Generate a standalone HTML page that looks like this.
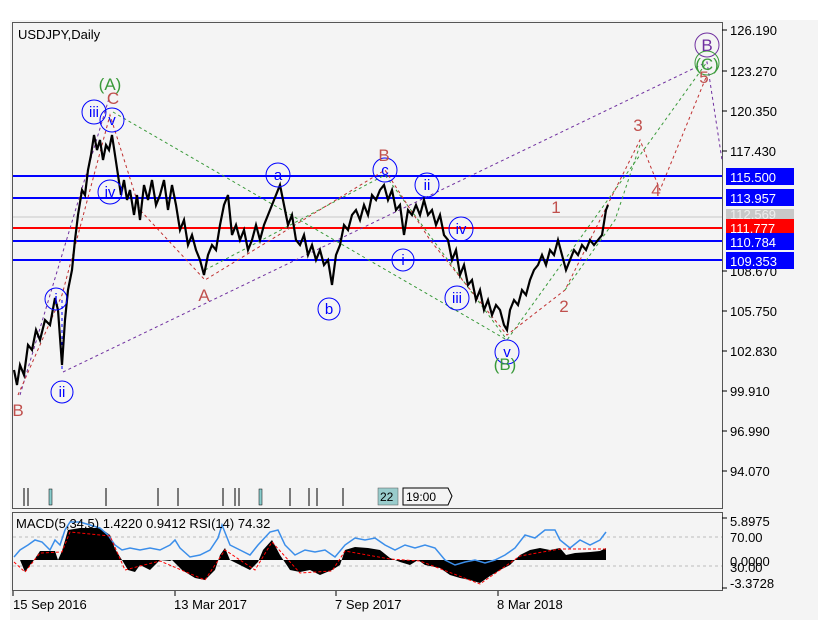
<!DOCTYPE html>
<html><head><meta charset="utf-8"><style>
body{margin:0;background:#fff;width:827px;height:631px;overflow:hidden;font-family:"Liberation Sans",sans-serif}
svg{position:absolute;left:0;top:0}
text{font-family:"Liberation Sans",sans-serif}
</style></head><body>
<svg width="827" height="631" viewBox="0 0 827 631">
<rect x="10" y="20" width="808" height="600" fill="#f4f4f4"/>
<rect x="12.5" y="22.5" width="710" height="486" fill="#f4f4f4" stroke="#555" stroke-width="1"/>
<rect x="12.5" y="512.5" width="710" height="78" fill="#f4f4f4" stroke="#555" stroke-width="1"/>
<text x="18" y="39" font-size="13" fill="#000">USDJPY,Daily</text>
<line x1="13" y1="217" x2="722" y2="217" stroke="#c8c8c8" stroke-width="1"/>
<g stroke-width="2">
<line x1="13" y1="176" x2="722" y2="176" stroke="#0000ff"/>
<line x1="13" y1="198" x2="722" y2="198" stroke="#0000ff"/>
<line x1="13" y1="228" x2="722" y2="228" stroke="#ff0000"/>
<line x1="13" y1="241" x2="722" y2="241" stroke="#0000ff"/>
<line x1="13" y1="260" x2="722" y2="260" stroke="#0000ff"/>
</g>
<g fill="none" stroke-width="1" stroke-dasharray="3,3">
<polyline points="63,372 707,62 722,160" stroke="#7030a0"/>
<polyline points="20,395 110,95" stroke="#7030a0"/>
<polyline points="113,112 507,340 707,62" stroke="#3a9a3a"/>
<polyline points="205,270 385,175 507,340" stroke="#3a9a3a"/>
<polyline points="18,395 62,295 110,115 140,210 205,280 385,170 430,240 507,335 565,290 640,140 660,190 707,75" stroke="#c03030"/>
<polyline points="565,290 615,220 640,145" stroke="#3a9a3a"/>
<polyline points="62,300 62,370" stroke="#0000ff"/>
</g>
<polyline fill="none" stroke="#000" stroke-width="2.2" points="14,370 17,385 20,365 24,375 28,345 32,350 36,330 40,340 45,320 50,325 55,298 58,310 62,365 65,320 68,290 72,270 75,240 78,215 82,190 85,195 88,170 91,155 94,135 97,150 100,140 103,160 106,145 109,150 112,135 115,155 118,175 121,195 124,180 127,200 130,190 134,215 137,195 140,220 144,185 148,200 152,180 156,205 160,195 164,180 168,210 172,185 176,205 180,230 184,220 188,245 192,235 196,250 200,260 204,275 208,255 212,245 216,250 220,225 224,205 228,195 232,235 236,225 240,240 244,230 248,250 252,240 256,225 260,240 264,225 268,215 272,205 276,195 280,185 284,205 288,225 292,215 296,240 300,245 304,235 308,255 312,245 316,260 320,250 324,265 328,260 332,285 336,255 340,245 344,225 348,230 352,215 356,210 360,220 364,205 368,215 372,195 376,200 380,190 384,185 388,200 392,190 396,210 400,205 404,235 408,210 412,215 416,205 420,215 424,200 428,215 432,210 436,225 440,215 444,235 448,240 452,260 456,250 460,275 464,265 468,285 472,280 476,300 480,290 484,310 488,300 492,315 496,305 500,310 504,325 507,330 510,310 514,300 518,305 522,290 526,295 530,280 534,270 538,265 542,255 546,265 550,250 554,255 558,240 562,255 566,270 570,260 574,250 578,255 582,245 586,250 590,240 594,245 598,240 602,235 606,210 608,205"/>
<g font-size="15" text-anchor="middle" fill="#0000ff">
<g fill="none" stroke="#0000ff" stroke-width="1">
<circle cx="94" cy="112" r="12"/><circle cx="112" cy="120" r="12"/><circle cx="110" cy="192" r="12"/>
<circle cx="56" cy="299" r="11"/><circle cx="62" cy="392" r="11"/><circle cx="278" cy="175" r="12"/>
<circle cx="329" cy="309" r="11"/><circle cx="385" cy="170" r="12"/><circle cx="427" cy="185" r="12"/>
<circle cx="403" cy="260" r="11"/><circle cx="461" cy="229" r="12"/><circle cx="457" cy="298" r="12"/>
<circle cx="507" cy="352" r="12"/><circle cx="707" cy="45" r="12" stroke="#7030a0"/><circle cx="707" cy="63" r="12" stroke="#3a9a3a"/>
</g>
<text x="94" y="117">iii</text><text x="112" y="125">v</text><text x="110" y="197">iv</text>
<text x="56" y="304">i</text><text x="62" y="397">ii</text><text x="278" y="180">a</text>
<text x="329" y="314">b</text><text x="385" y="175">c</text><text x="427" y="190">ii</text>
<text x="403" y="265">i</text><text x="461" y="234">iv</text><text x="457" y="303">iii</text>
<text x="507" y="357">v</text>
</g>
<g font-size="17" text-anchor="middle">
<text x="110" y="90" fill="#3a9a3a">(A)</text>
<text x="505" y="370" fill="#3a9a3a">(B)</text>
<text x="707" y="70" fill="#3a9a3a">(C)</text>
<text x="707" y="51" fill="#7030a0">B</text>
<text x="113" y="104" fill="#c0504d">C</text>
<text x="384" y="161" fill="#c0504d">B</text>
<text x="204" y="301" fill="#c0504d">A</text>
<text x="18" y="416" fill="#c0504d">B</text>
<text x="556" y="213" fill="#c0504d">1</text>
<text x="564" y="312" fill="#c0504d">2</text>
<text x="638" y="131" fill="#c0504d">3</text>
<text x="656" y="196" fill="#c0504d">4</text>
<text x="704" y="83" fill="#c0504d">5</text>
</g>
<g stroke="#000" stroke-width="1">
<line x1="722" y1="30" x2="727" y2="30"/><line x1="722" y1="71" x2="727" y2="71"/><line x1="722" y1="111" x2="727" y2="111"/>
<line x1="722" y1="151" x2="727" y2="151"/><line x1="722" y1="271" x2="727" y2="271"/><line x1="722" y1="311" x2="727" y2="311"/>
<line x1="722" y1="351" x2="727" y2="351"/><line x1="722" y1="391" x2="727" y2="391"/><line x1="722" y1="431" x2="727" y2="431"/><line x1="722" y1="471" x2="727" y2="471"/>
</g>
<g font-size="13" fill="#000">
<text x="730" y="35">126.190</text><text x="730" y="76">123.270</text><text x="730" y="116">120.350</text>
<text x="730" y="156">117.430</text><text x="730" y="276">108.670</text><text x="730" y="316">105.750</text>
<text x="730" y="356">102.830</text><text x="730" y="396">99.910</text><text x="730" y="436">96.990</text><text x="730" y="476">94.070</text>
</g>
<rect x="726" y="168" width="68" height="17" fill="#0000ff"/><text x="730" y="182" font-size="13" fill="#fff">115.500</text>
<rect x="726" y="189" width="68" height="17" fill="#0000ff"/><text x="730" y="203" font-size="13" fill="#fff">113.957</text>
<rect x="726" y="209" width="68" height="10" fill="#c8c8c8"/><text x="730" y="219" font-size="13" fill="#eee">112.569</text>
<rect x="726" y="219" width="68" height="17" fill="#ff0000"/><text x="730" y="233" font-size="13" fill="#fff">111.777</text>
<rect x="726" y="233" width="68" height="17" fill="#0000ff"/><text x="730" y="247" font-size="13" fill="#fff">110.784</text>
<rect x="726" y="252" width="68" height="17" fill="#0000ff"/><text x="730" y="266" font-size="13" fill="#fff">109.353</text>
<g stroke="#000" stroke-width="1">
<line x1="24" y1="488" x2="24" y2="506"/><line x1="28" y1="488" x2="28" y2="506"/><line x1="106" y1="488" x2="106" y2="506"/>
<line x1="158" y1="488" x2="158" y2="506"/><line x1="178" y1="488" x2="178" y2="506"/><line x1="223" y1="488" x2="223" y2="506"/>
<line x1="235" y1="488" x2="235" y2="506"/><line x1="239" y1="488" x2="239" y2="506"/><line x1="290" y1="488" x2="290" y2="506"/>
<line x1="309" y1="488" x2="309" y2="506"/><line x1="317" y1="488" x2="317" y2="506"/><line x1="343" y1="488" x2="343" y2="506"/>
</g>
<rect x="49" y="489" width="3" height="16" fill="#8cc" stroke="#000" stroke-width="0.5"/>
<rect x="259" y="489" width="3" height="16" fill="#8cc" stroke="#000" stroke-width="0.5"/>
<rect x="378" y="488" width="20" height="17" fill="#9cc" stroke="#555" stroke-width="0.5"/><text x="380" y="501" font-size="12">22</text>
<path d="M403 488 H448 L452 496 L448 505 H403 Z" fill="#f4f4f4" stroke="#000"/><text x="406" y="501" font-size="12">19:00</text>
<g stroke="#bbb" stroke-dasharray="3,3"><line x1="13" y1="537" x2="722" y2="537"/><line x1="13" y1="566" x2="722" y2="566"/></g>
<polygon fill="#000" points="14,560 20,560 25,572 30,565 34,560 40,551 48,551 55,551 58,560 62,551 68,530 80,528 100,528 110,535 115,549 122,560 128,570 135,572 140,565 150,570 160,560 170,561 172,560 182,570 195,578 205,580 215,570 220,555 225,548 230,560 240,565 250,570 258,562 263,550 272,540 280,555 290,570 300,572 310,570 320,575 332,570 340,565 345,550 355,547 368,548 380,550 390,558 400,562 410,565 418,560 425,565 440,568 450,575 460,578 470,580 480,583 490,576 500,570 510,565 520,555 530,550 540,548 550,550 560,548 566,555 575,553 590,552 600,551 606,548 606,560 14,560"/>
<polyline fill="none" stroke="#3b8eea" stroke-width="1.5" points="14,557 20,550 28,545 35,540 42,542 50,550 55,540 60,545 65,530 70,522 80,522 90,525 100,528 108,535 115,545 122,550 130,548 140,550 150,548 160,550 170,545 175,540 180,548 190,557 200,555 210,550 218,538 222,525 230,545 240,550 250,555 258,545 270,532 278,530 285,545 295,555 305,550 315,552 325,550 335,557 345,545 355,538 365,540 375,538 385,545 395,550 405,545 415,548 425,545 435,548 445,560 455,565 465,562 475,560 485,563 495,560 505,555 515,548 525,535 535,538 545,530 555,530 560,540 570,548 580,540 590,545 600,540 606,532"/>
<polyline fill="none" stroke="#ff0000" stroke-width="1" stroke-dasharray="3,2" points="14,562 25,572 40,553 62,552 70,532 110,536 125,570 140,566 160,561 205,580 225,550 255,570 272,542 300,573 332,571 345,551 390,559 420,561 480,584 520,556 560,549 606,549"/>
<text x="16" y="528" font-size="13">MACD(5,34,5) 1.4220 0.9412 RSI(14) 74.32</text>
<g stroke="#000"><line x1="722" y1="518" x2="727" y2="518"/><line x1="722" y1="588" x2="727" y2="588"/></g>
<g font-size="13"><text x="730" y="526">5.8975</text><text x="730" y="542">70.00</text><text x="730" y="566">0.0000</text><text x="730" y="572">30.00</text><text x="730" y="588">-3.3728</text></g>
<g stroke="#000"><line x1="13" y1="591" x2="13" y2="596"/><line x1="175" y1="591" x2="175" y2="596"/><line x1="336" y1="591" x2="336" y2="596"/><line x1="498" y1="591" x2="498" y2="596"/></g>
<g font-size="13"><text x="13" y="609">15 Sep 2016</text><text x="174" y="609">13 Mar 2017</text><text x="335" y="609">7 Sep 2017</text><text x="497" y="609">8 Mar 2018</text></g>
</svg>
</body></html>
